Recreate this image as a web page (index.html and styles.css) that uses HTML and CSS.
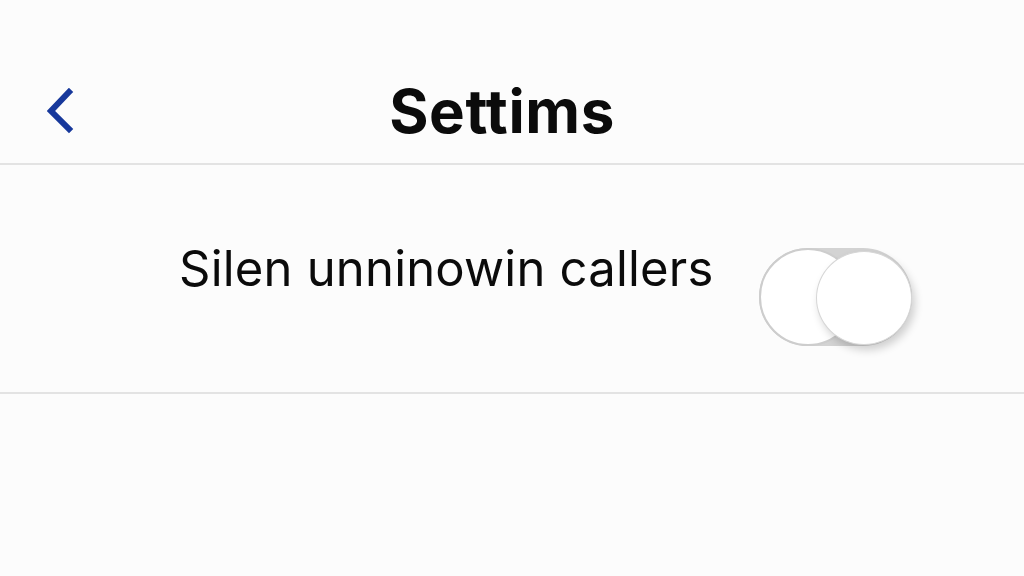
FILE: index.html
```html
<!DOCTYPE html>
<html lang="en">
<head>
<meta charset="utf-8">
<title>Settims</title>
<link rel="stylesheet" href="styles.css">
</head>
<body>
  <header class="nav-bar">
    <button class="back-btn" aria-label="Back">
      <svg width="28" height="46" viewBox="0 0 28 46" aria-hidden="true">
        <path d="M22 4 L4 23 L22 41" fill="none" stroke="#17389b" stroke-width="6" stroke-linecap="square" stroke-linejoin="miter"/>
      </svg>
    </button>
    <h1 class="nav-title">Settims</h1>
    <span class="nav-spacer"></span>
  </header>

  <section class="settings-list">
    <div class="setting-row">
      <span class="setting-label">Silen unninowin callers</span>
      <div class="toggle" role="switch" aria-checked="false">
        <span class="toggle-slot"></span>
        <span class="toggle-knob"></span>
      </div>
    </div>
  </section>
</body>
</html>
```

FILE: styles.css
```css
* { box-sizing: border-box; }

html, body {
  margin: 0;
  padding: 0;
  background: #fcfcfc;
  font-family: Inter, "Liberation Sans", Arial, sans-serif;
  color: #0b0b0b;
  width: 1024px;
  height: 576px;
  overflow: hidden;
}

/* top navigation bar */
.nav-bar {
  display: grid;
  grid-template-columns: 1fr auto 1fr;
  align-items: center;
  height: 165px;
  padding: 58px 20px 0 0;
  border-bottom: 2px solid #e3e3e3;
}

.back-btn {
  justify-self: start;
  margin-left: 47px;
  padding: 0;
  border: 0;
  background: none;
  display: flex;
}

.nav-title {
  margin: 0;
  font-size: 60px;
  font-weight: 700;
  line-height: 62px;
  letter-spacing: 0.6px;
}

/* settings rows */
.setting-row {
  display: flex;
  align-items: flex-start;
  gap: 45px;
  height: 229px;
  padding: 73px 0 0 179px;
  border-bottom: 2px solid #e3e3e3;
}

.setting-label {
  font-size: 49px;
  line-height: 62px;
  letter-spacing: 0.2px;
}

/* switch */
.toggle {
  position: relative;
  width: 153px;
  height: 98px;
  margin-top: 10px;
  border-radius: 49px;
  background: #d3d3d3;
}

.toggle-slot {
  position: absolute;
  left: 0;
  top: 0;
  width: 98px;
  height: 98px;
  border-radius: 50%;
  background: #ffffff;
  border: 2px solid #cdcdcd;
}

.toggle-knob {
  position: absolute;
  right: 0;
  top: 3px;
  width: 96px;
  height: 94px;
  border-radius: 50%;
  background: #ffffff;
  border: 1px solid #d6d6d6;
  box-shadow: 3px 5px 8px rgba(0, 0, 0, 0.18);
}
```
